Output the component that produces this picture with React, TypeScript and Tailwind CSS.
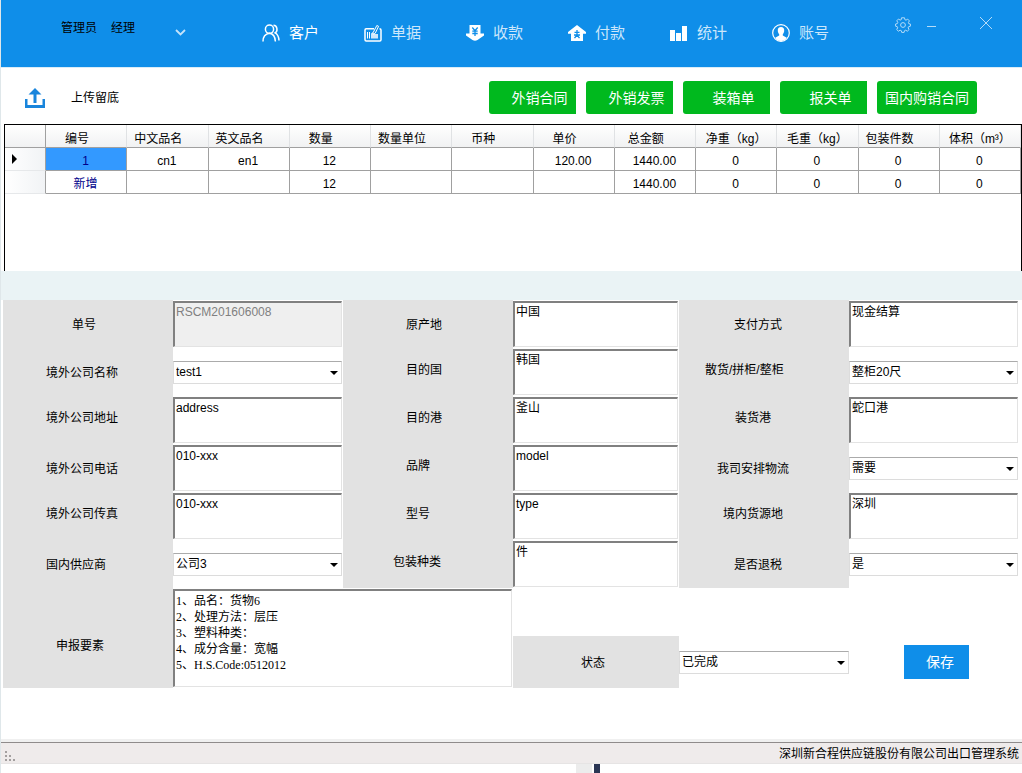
import { ReactNode, useState } from "react";

const UsersIcon = () => (
  <svg width="18" height="18" viewBox="0 0 18 18" fill="none" stroke="currentColor" strokeWidth="1.5">
    <circle cx="7.5" cy="5.2" r="4.1" />
    <path d="M1 17.5c0-4.6 2.4-7.6 6.5-8.2 3.6.4 5.6 3.2 5.9 8.2" />
    <path d="M11.5 1.3c4 .2 4.600 5.900 1.600 7.600 2.400 1.300 3.700 4 3.900 7.600" />
  </svg>
);

const BillIcon = () => (
  <svg width="18" height="18" viewBox="0 0 18 18" fill="none" stroke="currentColor" strokeWidth="1.5">
    <path d="M10 4.800H2.200Q1 4.800 1 6v9.800Q1 17 2.200 17h13.600q1.200 0 1.200-1.200V6q0-1.200-1.500-1.200" />
    <path d="M3.500 8v6.500M5.500 8v6.500" strokeWidth="1" />
    <path d="M7 14.500V9.500L9 8v2h5v4.500z" fill="currentColor" stroke="none" opacity="0.8" />
    <path d="M9.200 8.500l3.600-7 1.800.8-3.400 7-2 1z" strokeWidth="1" />
  </svg>
);

const CollectIcon = () => (
  <svg width="18" height="18" viewBox="0 0 18 18">
    <path d="M3.500 1h11v8.500H18v2L11.500 16q-2.500 1.500-5 0L0 11.500v-2h3.500z" fill="currentColor" />
    <path d="M6.300 3.500L9 6.700l2.700-3.200M9 6.500V12M6.300 7.200h5.400M6.300 9.500h5.400" fill="none" stroke="#0f8ee9" strokeWidth="1.300" />
  </svg>
);

const PayIcon = () => (
  <svg width="18" height="18" viewBox="0 0 18 18">
    <path d="M9 1l9 7v1.800h-3V17H3V9.800H0V8z" fill="currentColor" />
    <path d="M9 6v5M6.500 8.300h5M6 11h6M9 11l-2.500 3.200M9 11l2.500 3.200" fill="none" stroke="#0f8ee9" strokeWidth="1.300" />
  </svg>
);

const StatsIcon = () => (
  <svg width="18" height="18" viewBox="0 0 18 18" fill="currentColor">
    <path d="M0 6h5v11H0zM6 9h5v8H6zM12 2h5v15h-5z" />
  </svg>
);

const AccountIcon = () => (
  <svg width="18" height="18" viewBox="0 0 18 18">
    <circle cx="9" cy="9" r="8.300" fill="none" stroke="currentColor" strokeWidth="1.200" />
    <path d="M9 3c2.300 0 3.300 1.500 3.200 3.500 0 1.700-.6 2.700-1.400 3.700v1.300l4 2.300Q12.500 17 9 17t-5.800-3.200l4-2.300v-1.300C6.400 9.200 5.800 8.200 5.800 6.500 5.700 4.500 6.700 3 9 3z" fill="currentColor" />
  </svg>
);

const UploadIcon = () => (
  <svg width="20" height="20" viewBox="0 0 20 20" fill="#1985dc">
    <path d="M10 0l6.500 6.500h-5V15h-3V6.500h-5z" />
    <path d="M0 11h2.500v6h15v-6H20v9H0z" />
  </svg>
);

const GearIcon = () => (
  <svg width="16" height="16" viewBox="0 0 16 16" fill="none" stroke="currentColor" strokeWidth="1">
    <path d="M6.500.8h3l.4 1.900 1.100.5 1.700-1.100 1.700 1.800-1 1.700.4 1.100 1.600.3v2.200l-1.800.5-.5 1.200 1 1.600-1.800 1.700-1.600-1-1.200.5-.4 1.700H6.700l-.4-1.700-1.200-.5-1.700 1-1.700-1.700 1-1.700-.4-1.100L.6 9.200V7l1.800-.5.400-1.100-1-1.600L3.500 2l1.600 1.100 1.100-.4z" />
    <circle cx="8" cy="8" r="2.400" />
  </svg>
);

const navItems = [
  { name: "客户", icon: <UsersIcon /> },
  { name: "单据", icon: <BillIcon /> },
  { name: "收款", icon: <CollectIcon /> },
  { name: "付款", icon: <PayIcon /> },
  { name: "统计", icon: <StatsIcon /> },
  { name: "账号", icon: <AccountIcon /> },
];

const documents = ["外销合同", "外销发票", "装箱单", "报关单"];

const columns = [
  { name: "编号" },
  { name: "中文品名" },
  { name: "英文品名" },
  { name: "数量" },
  { name: "数量单位" },
  { name: "币种" },
  { name: "单价" },
  { name: "总金额" },
  { name: "净重（kg）", unit: true },
  { name: "毛重（kg）", unit: true },
  { name: "包装件数" },
  { name: "体积（m³）", unit: true },
];

const rows = [
  ["1", "cn1", "en1", "12", "", "", "120.00", "1440.00", "0", "0", "0", "0"],
  ["新增", "", "", "12", "", "", "", "1440.00", "0", "0", "0", "0"],
];

type Field = {
  id: string;
  label: string;
  value: string;
  // where the label sits inside its grey cell
  align: string;
  low?: boolean;
  select?: boolean;
  disabled?: boolean;
};

const LEFT = "pl-[43px]";
const MIDDLE = "pl-[63px]";
const CENTER = "justify-center pr-[22px]";

const fields: Field[] = [
  { id: "orderNo", label: "单号", value: "RSCM201606008", align: "justify-center pr-2", low: true, disabled: true },
  { id: "origin", label: "原产地", value: "中国", align: MIDDLE, low: true },
  { id: "payment", label: "支付方式", value: "现金结算", align: "justify-center pr-3", low: true },
  { id: "company", label: "境外公司名称", value: "test1", align: LEFT, low: true, select: true },
  { id: "country", label: "目的国", value: "韩国", align: MIDDLE },
  { id: "container", label: "散货/拼柜/整柜", value: "整柜20尺", align: "pl-[26px]", select: true },
  { id: "address", label: "境外公司地址", value: "address", align: LEFT },
  { id: "destPort", label: "目的港", value: "釜山", align: MIDDLE },
  { id: "loadPort", label: "装货港", value: "蛇口港", align: CENTER },
  { id: "phone", label: "境外公司电话", value: "010-xxx", align: LEFT, low: true },
  { id: "brand", label: "品牌", value: "model", align: MIDDLE },
  { id: "logistics", label: "我司安排物流", value: "需要", align: CENTER, low: true, select: true },
  { id: "fax", label: "境外公司传真", value: "010-xxx", align: LEFT },
  { id: "model", label: "型号", value: "type", align: MIDDLE },
  { id: "source", label: "境内货源地", value: "深圳", align: CENTER },
  { id: "supplier", label: "国内供应商", value: "公司3", align: LEFT, low: true, select: true },
  { id: "packing", label: "包装种类", value: "件", align: CENTER },
  { id: "refund", label: "是否退税", value: "是", align: "justify-center pr-3", low: true, select: true },
];

const declaration = `1、品名：货物6
2、处理方法：层压
3、塑料种类：
4、成分含量：宽幅
5、H.S.Code:0512012`;

const textBox =
  "block w-full resize-none overflow-hidden border-t-2 border-l-2 border-r border-b border-t-[#808080] border-l-[#808080] border-r-[#e3e3e3] border-b-[#e3e3e3] pl-px leading-4 outline-none";

const SelectBox = ({ id, value }: { id: string; value: string }) => (
  <div className="relative w-full">
    <select
      id={id}
      defaultValue={value}
      className="block h-[23px] w-full appearance-none border border-[#dcdcdc] border-t-[#ababab] bg-white pl-[2px] outline-none"
    >
      <option>{value}</option>
    </select>
    <svg className="pointer-events-none absolute right-1 top-[10px]" width="8" height="4" viewBox="0 0 8 4">
      <path d="M0 0h8L4 4z" />
    </svg>
  </div>
);

const FieldLabel = ({ htmlFor, className, children }: { htmlFor: string; className: string; children: ReactNode }) => (
  <label htmlFor={htmlFor} className={`flex items-center whitespace-nowrap bg-[#e2e2e2] ${className}`}>
    {children}
  </label>
);

const App = () => {
  const [activeNav, setActiveNav] = useState("客户");

  return (
    <div className="border-l border-[#dfe7ea] bg-white font-['Liberation_Sans','Noto_Sans_CJK_SC',sans-serif] text-[12px] leading-4 text-black">
      <header className="flex h-[68px] items-start border-b border-[#d9ecf8] bg-[#0f8ee9]">
        <div className="flex w-[261px] shrink-0 pl-[60px]">
          <span className="w-[50px] pt-5">管理员</span>
          <span className="w-[64px] pt-5">经理</span>
          <button type="button" aria-label="展开" className="pt-[29px]">
            <svg width="11" height="7" viewBox="0 0 11 7" fill="none" stroke="#c4e3fa" strokeWidth="1.800">
              <path d="M1 1l4.500 4.500L10 1" />
            </svg>
          </button>
        </div>
        <nav className="flex gap-[45px] pt-6">
          {navItems.map((item) => (
            <button
              key={item.name}
              type="button"
              onClick={() => setActiveNav(item.name)}
              className="flex items-center gap-[9px] whitespace-nowrap text-[15px] leading-[18px] text-white"
            >
              {item.icon}
              <span className={activeNav === item.name ? "text-white" : "text-[#cce7fb]"}>{item.name}</span>
            </button>
          ))}
        </nav>
        <div className="ml-auto flex items-center pr-[30px] pt-[17px] text-[#b5dcf8]">
          <button type="button" aria-label="设置" className="mr-4">
            <GearIcon />
          </button>
          <button type="button" aria-label="最小化" className="mr-11">
            <svg width="9" height="16" viewBox="0 0 9 16" stroke="currentColor">
              <path d="M0 9.500h9" />
            </svg>
          </button>
          <button type="button" aria-label="关闭">
            <svg width="12" height="16" viewBox="0 0 12 16" stroke="currentColor">
              <path d="M0 0l12 12M12 0L0 12" />
            </svg>
          </button>
        </div>
      </header>

      <div className="flex h-14 items-start justify-between pl-6 pr-[45px] pt-[13px]">
        <button type="button" className="flex h-[33px] items-center gap-[26px]">
          <UploadIcon />
          <span className="pt-px">上传留底</span>
        </button>
        <div className="flex gap-[10px] text-[14px] text-white">
          {documents.map((name) => (
            <button key={name} type="button" className="h-[33px] w-[87px] rounded-l-[3px] bg-[#00b91e] pl-[14px]">
              {name}
            </button>
          ))}
          <button type="button" className="h-[33px] w-[100px] rounded-[3px] bg-[#00b91e]">
            国内购销合同
          </button>
        </div>
      </div>

      <div className="ml-[3px] h-[147px] border-x border-t border-black">
        <table className="w-full table-fixed border-separate border-spacing-0 text-center">
          <thead>
            <tr className="h-[23px] bg-gradient-to-b from-white to-[#f0f1f2]">
              <th className="w-[41px] border-b border-r border-[#a0a0a0] p-0" />
              {columns.map((column) => (
                <th
                  key={column.name}
                  className={`whitespace-nowrap border-b border-r border-b-[#a0a0a0] border-r-[#e0e2e4] p-0 pt-[6px] font-normal ${
                    column.unit ? "" : "pr-[18px]"
                  }`}
                >
                  {column.name}
                </th>
              ))}
            </tr>
          </thead>
          <tbody>
            {rows.map((row, i) => (
              <tr key={i} className="h-[23px]">
                <th className="border-b border-r border-b-[#e6e8ea] border-r-[#a0a0a0] bg-gradient-to-r from-white to-[#f1f3f5] p-0">
                  {i === 0 && (
                    <svg className="ml-[7px]" width="5" height="10" viewBox="0 0 5 10">
                      <path d="M0 0l5 5-5 5z" />
                    </svg>
                  )}
                </th>
                {row.map((cell, j) => (
                  <td
                    key={j}
                    className={`border-b border-r border-[#a0a0a0] p-0 pr-px pt-[3px] ${i === 0 && j === 0 ? "bg-[#3399ff]" : ""}`}
                  >
                    {j === 0 ? (
                      <a href="#" className="text-[#00008b]">
                        {cell}
                      </a>
                    ) : (
                      cell
                    )}
                  </td>
                ))}
              </tr>
            ))}
          </tbody>
        </table>
      </div>

      <div className="h-[29px] bg-[#eaf3f5]" />

      <form className="pl-[2px] pr-[3px]" onSubmit={(event) => event.preventDefault()}>
        <div className="grid grid-cols-[170fr_170fr_170fr_166fr_170fr_170fr]">
          {fields.map((field) => (
            <div key={field.id} className="contents">
              <FieldLabel htmlFor={field.id} className={`h-12 ${field.align} ${field.low ? "pt-[2px]" : "pb-1"}`}>
                {field.label}
              </FieldLabel>
              <div className="flex items-center pr-px">
                {field.select ? (
                  <SelectBox id={field.id} value={field.value} />
                ) : (
                  <textarea
                    id={field.id}
                    defaultValue={field.value}
                    disabled={field.disabled}
                    className={`h-[46px] pt-px ${textBox} ${field.disabled ? "bg-[#efefef] text-[#808080]" : "bg-white"}`}
                  />
                )}
              </div>
            </div>
          ))}

          <FieldLabel htmlFor="declaration" className="h-[100px] justify-center pr-4 pt-4">
            申报要素
          </FieldLabel>
          <div className="col-span-2 pr-px pt-px">
            <textarea
              id="declaration"
              defaultValue={declaration}
              className={`h-[98px] pt-[2px] font-['Liberation_Serif','Noto_Sans_CJK_SC',serif] ${textBox}`}
            />
          </div>
          <FieldLabel htmlFor="status" className="h-[52px] justify-center self-end pr-[6px] pt-[2px]">
            状态
          </FieldLabel>
          <div className="flex h-[52px] items-center self-end">
            <SelectBox id="status" value="已完成" />
          </div>
          <div className="flex h-[52px] items-center justify-center self-end pl-1">
            <button type="submit" className="h-[34px] w-[65px] bg-[#0f8ee9] pl-2 text-[14px] text-white">
              保存
            </button>
          </div>
        </div>
      </form>

      <footer className="mt-[51px] border-t-[3px] border-[#f0f0f0]">
        <div className="flex h-[22px] items-center justify-between border-b border-t border-b-[#e6e4e4] border-t-[#8f8b8b] bg-[#efebeb] pl-1 pr-[3px]">
          <svg className="self-end" width="10" height="12" viewBox="0 0 10 12" fill="#a39f9f">
            <path d="M0 0h2v2H0zM0 4h2v2H0zM4 4h2v2H4zM0 8h2v2H0zM4 8h2v2H4zM8 8h2v2H8z" />
          </svg>
          <span className="pt-px">深圳新合程供应链股份有限公司出口管理系统</span>
        </div>
        <div className="flex h-[9px] justify-center gap-[2px] pl-[153px]">
          <div className="w-4 bg-[#ececec]" />
          <div className="w-[6px] bg-[#2b3654]" />
        </div>
      </footer>
    </div>
  );
};

export default App;
